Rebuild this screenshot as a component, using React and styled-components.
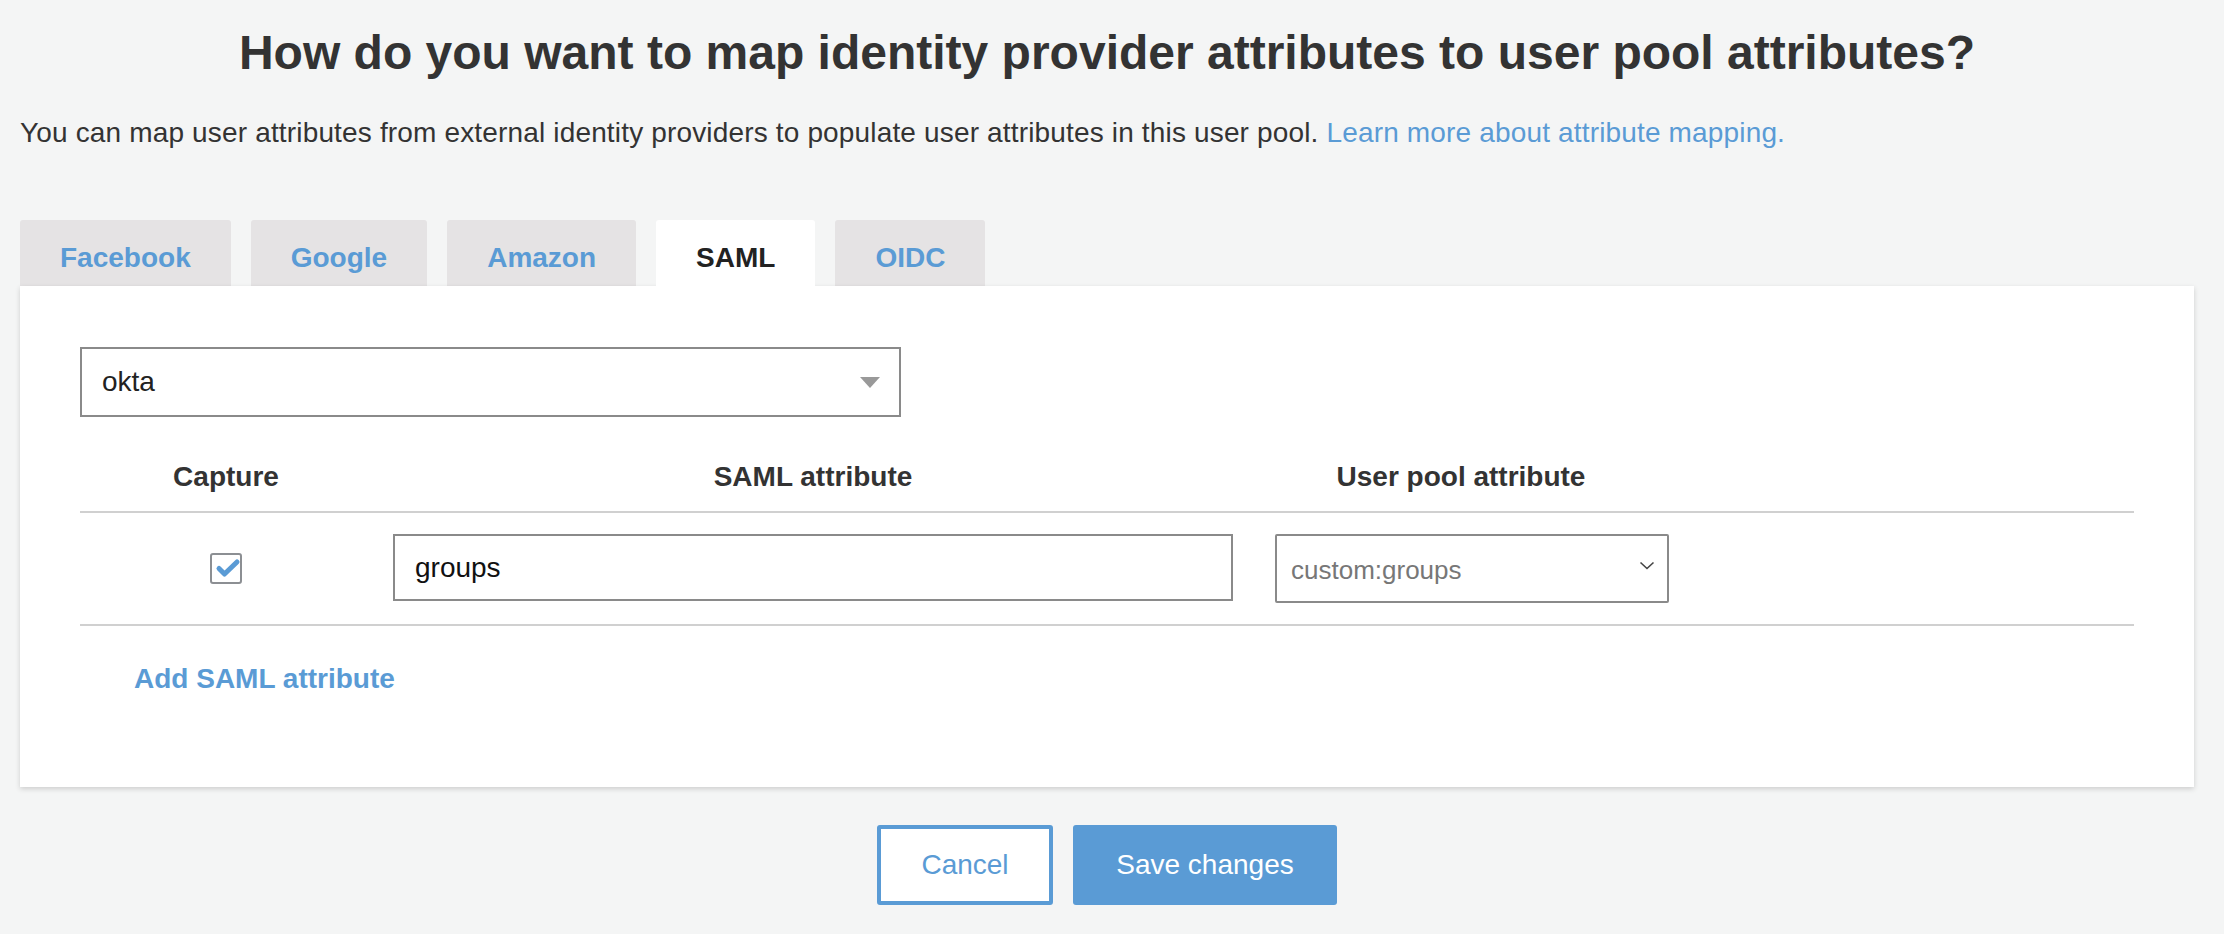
import React from "react";
import styled, { createGlobalStyle } from "styled-components";

const GlobalStyle = createGlobalStyle`
  html, body {
    margin: 0;
    padding: 0;
    background: #f4f5f5;
    font-family: "Liberation Sans", Arial, Helvetica, sans-serif;
    color: #333;
  }
  * {
    box-sizing: border-box;
  }
`;

const BLUE = "#5a9bd5";

const tabs = ["Facebook", "Google", "Amazon", "SAML", "OIDC"];

function App() {
  return (
    <>
      <GlobalStyle />
      <Page>
        <Title>How do you want to map identity provider attributes to user pool attributes?</Title>
        <Description>
          You can map user attributes from external identity providers to populate user attributes in
          this user pool. <Link href="#">Learn more about attribute mapping.</Link>
        </Description>

        <TabBar>
          {tabs.map((t) => (
            <Tab key={t} active={t === "SAML"}>
              {t}
            </Tab>
          ))}
        </TabBar>

        <Panel>
          <ProviderSelect>
            <span>okta</span>
            <Triangle />
          </ProviderSelect>

          <Table>
            <HeaderRow>
              <HeaderCell>Capture</HeaderCell>
              <HeaderCell>SAML attribute</HeaderCell>
              <HeaderCell>User pool attribute</HeaderCell>
              <HeaderCell />
            </HeaderRow>
            <Row>
              <Cell center>
                <Checkbox>
                  <svg width="32" height="31" viewBox="0 0 32 31">
                    <polyline
                      points="9,15.5 14.5,21 27,9"
                      fill="none"
                      stroke={BLUE}
                      strokeWidth="5"
                      strokeLinecap="round"
                      strokeLinejoin="round"
                    />
                  </svg>
                </Checkbox>
              </Cell>
              <Cell pad>
                <TextInput>groups</TextInput>
              </Cell>
              <Cell pad>
                <AttrSelect>
                  <span>custom:groups</span>
                  <svg width="16" height="9" viewBox="0 0 16 9">
                    <polyline points="1.5,1.5 8,7.5 14.5,1.5" fill="none" stroke="#444" strokeWidth="1.6" />
                  </svg>
                </AttrSelect>
              </Cell>
              <Cell />
            </Row>
          </Table>

          <AddLink>Add SAML attribute</AddLink>
        </Panel>

        <Actions>
          <Button variant="outline">Cancel</Button>
          <Button variant="primary">Save changes</Button>
        </Actions>
      </Page>
    </>
  );
}

export default App;

const Page = styled.div`
  min-height: 934px;
  padding: 24px 30px 28px 20px;
`;

const Title = styled.h1`
  margin: 0;
  font-size: 48px;
  line-height: 58px;
  font-weight: bold;
  text-align: center;
  color: #333;
`;

const Description = styled.p`
  margin: 31px 0 0;
  font-size: 28px;
  line-height: 40px;
  letter-spacing: 0.16px;
  color: #333;
`;

const Link = styled.a`
  color: ${BLUE};
  text-decoration: none;
`;

const TabBar = styled.div`
  display: flex;
  gap: 20px;
  margin-top: 67px;
`;

const Tab = styled.div`
  height: 66px;
  padding: 22px 40px 12px;
  font-size: 28px;
  line-height: 32px;
  font-weight: bold;
  border-radius: 3px 3px 0 0;
  background: ${(p) => (p.active ? "#fff" : "#e5e3e4")};
  color: ${(p) => (p.active ? "#222" : BLUE)};
  position: relative;
  z-index: ${(p) => (p.active ? 2 : 0)};
`;

const Panel = styled.div`
  position: relative;
  z-index: 1;
  background: #fff;
  padding: 61px 60px 92px;
  box-shadow: 0 2px 5px rgba(0, 0, 0, 0.16);
`;

const ProviderSelect = styled.div`
  width: 821px;
  height: 70px;
  border: 2px solid #8a8a8a;
  display: flex;
  align-items: center;
  justify-content: space-between;
  padding: 0 19px 0 20px;
  font-size: 28px;
  color: #222;
`;

const Triangle = styled.div`
  width: 0;
  height: 0;
  border-left: 10px solid transparent;
  border-right: 10px solid transparent;
  border-top: 11px solid #999;
`;

const Table = styled.div`
  margin-top: 24px;
`;

const HeaderRow = styled.div`
  display: grid;
  grid-template-columns: 292px 882px 414px 1fr;
  border-bottom: 2px solid #d0d0d0;
`;

const HeaderCell = styled.div`
  padding: 20px 0 18px;
  font-size: 28px;
  line-height: 32px;
  font-weight: bold;
  text-align: center;
  color: #333;
`;

const Row = styled.div`
  display: grid;
  grid-template-columns: 292px 882px 414px 1fr;
  align-items: center;
  padding: 19px 0 21px;
  border-bottom: 2px solid #d0d0d0;
`;

const Cell = styled.div`
  display: flex;
  justify-content: ${(p) => (p.center ? "center" : "flex-start")};
  padding-left: ${(p) => (p.pad ? "21px" : "0")};
  overflow: visible;
  min-width: 0;
`;

const Checkbox = styled.div`
  width: 32px;
  height: 31px;
  border: 2px solid #8c8f93;
  border-radius: 3px;
  background: #fff;
  position: relative;
  margin-top: 2px;

  svg {
    position: absolute;
    left: -2px;
    top: -2px;
  }
`;

const TextInput = styled.div`
  flex-shrink: 0;
  width: 840px;
  height: 67px;
  border: 2px solid #8a8a8a;
  display: flex;
  align-items: center;
  padding-left: 20px;
  font-size: 28px;
  color: #111;
`;

const AttrSelect = styled.div`
  flex-shrink: 0;
  width: 394px;
  height: 69px;
  margin-top: 2px;
  border: 2px solid #8a8a8a;
  border-radius: 2px;
  display: flex;
  align-items: center;
  justify-content: space-between;
  padding: 0 12px 0 14px;
  font-size: 26px;
  color: #777;

  span {
    margin-top: 4px;
  }
  svg {
    margin-bottom: 6px;
  }
`;

const AddLink = styled.div`
  padding: 37px 54px 0;
  font-size: 28px;
  line-height: 32px;
  font-weight: bold;
  color: ${BLUE};
`;

const Actions = styled.div`
  display: flex;
  justify-content: center;
  gap: 20px;
  margin-top: 38px;
`;

const Button = styled.div`
  height: 80px;
  display: flex;
  align-items: center;
  justify-content: center;
  font-size: 28px;
  border-radius: 3px;
  width: ${(p) => (p.variant === "primary" ? "264px" : "176px")};
  background: ${(p) => (p.variant === "primary" ? BLUE : "#fff")};
  color: ${(p) => (p.variant === "primary" ? "#fff" : BLUE)};
  border: ${(p) => (p.variant === "primary" ? "none" : `4px solid ${BLUE}`)};
`;
